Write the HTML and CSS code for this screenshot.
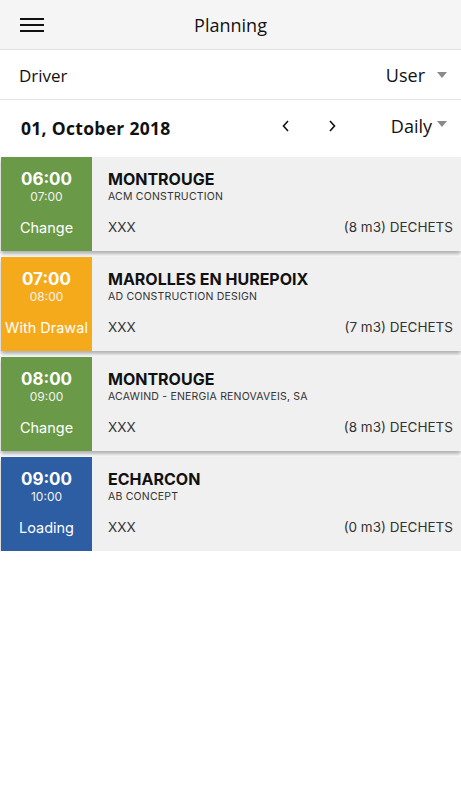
FILE: index.html
```html
<!DOCTYPE html>
<html>
<head>
<meta charset="utf-8">
<link rel="stylesheet" href="styles.css">
</head>
<body>
<header class="topbar">
  <svg class="menu" width="24" height="16" viewBox="0 0 24 16"><rect x="0" y="1" width="24" height="2" fill="#111"/><rect x="0" y="7" width="24" height="2" fill="#111"/><rect x="0" y="13" width="24" height="2" fill="#111"/></svg>
  <div class="title">Planning</div>
</header>
<div class="row driver">
  <span class="label">Driver</span>
  <span class="select">User <span class="caret"></span></span>
</div>
<div class="row daterow">
  <span class="date">01, October 2018</span>
  <span class="nav">
    <svg width="10" height="14" viewBox="0 0 10 14"><path d="M7 2 L2.5 7 L7 12" fill="none" stroke="#111" stroke-width="1.6"/></svg>
    <svg width="10" height="14" viewBox="0 0 10 14"><path d="M3 2 L7.5 7 L3 12" fill="none" stroke="#111" stroke-width="1.6"/></svg>
  </span>
  <span class="select daily">Daily <span class="caret"></span></span>
</div>
<main class="list">
  <div class="card">
    <div class="time green"><b>06:00</b><small>07:00</small><span class="status">Change</span></div>
    <div class="info"><div class="place">MONTROUGE</div><div class="company">ACM CONSTRUCTION</div><div class="bottom"><span>XXX</span><span>(8 m3) DECHETS</span></div></div>
  </div>
  <div class="card">
    <div class="time orange"><b>07:00</b><small>08:00</small><span class="status">With Drawal</span></div>
    <div class="info"><div class="place">MAROLLES EN HUREPOIX</div><div class="company">AD CONSTRUCTION DESIGN</div><div class="bottom"><span>XXX</span><span>(7 m3) DECHETS</span></div></div>
  </div>
  <div class="card">
    <div class="time green"><b>08:00</b><small>09:00</small><span class="status">Change</span></div>
    <div class="info"><div class="place">MONTROUGE</div><div class="company">ACAWIND - ENERGIA RENOVAVEIS, SA</div><div class="bottom"><span>XXX</span><span>(8 m3) DECHETS</span></div></div>
  </div>
  <div class="card">
    <div class="time blue"><b>09:00</b><small>10:00</small><span class="status">Loading</span></div>
    <div class="info"><div class="place">ECHARCON</div><div class="company">AB CONCEPT</div><div class="bottom"><span>XXX</span><span>(0 m3) DECHETS</span></div></div>
  </div>
</main>
</body>
</html>
```
FILE: styles.css
```css
* { box-sizing: border-box; }
body { margin: 0; width: 461px; background: #fff; font-family: "Open Sans", "Noto Sans", sans-serif; color: #111; }
.topbar { height: 50px; background: #f5f5f5; border-bottom: 1px solid #e2e2e2; display: flex; align-items: center; justify-content: center; position: relative; }
.menu { position: absolute; left: 20px; top: 17px; }
.title { font-size: 18px; font-weight: 500; color: #111; margin-top: 1px; }
.row { display: flex; align-items: center; padding: 0 14px 0 19px; }
.driver { height: 50px; border-bottom: 1px solid #e3e3e3; }
.label { font-size: 17px; flex: 1; margin-top: 1px; }
.select { font-size: 18px; display: flex; align-items: center; }
.caret { display: inline-block; width: 0; height: 0; border-left: 5.5px solid transparent; border-right: 5.5px solid transparent; border-top: 6px solid #8a8a8a; margin-left: 12px; margin-top: 1px; }
.daterow { height: 56px; padding-left: 21px; padding-right: 14px; padding-bottom: 2px; }
.date { font-size: 17.5px; font-weight: 700; flex: 1; margin-top: 1px; letter-spacing: 0.3px; }
.nav { display: flex; gap: 36px; margin-right: 54px; margin-top: -2px; }
.daily .caret { margin-left: 5px; margin-top: -4px; }
.daily { margin-top: -2px; }
.list { display: flex; flex-direction: column; gap: 6px; padding: 1px 0 0 1px; }
.card { height: 94px; display: flex; background: #f0f0f0; box-shadow: 0 3px 4px rgba(0,0,0,0.32); font-family: Inter, Roboto, sans-serif; }
.time { width: 91px; display: flex; flex-direction: column; align-items: center; color: #fff; padding-top: 12px; }
.time b { font-size: 17px; font-weight: 700; line-height: 20px; }
.time small { font-size: 12px; line-height: 14px; margin-top: 1px; color: #f3f3f3; }
.status { font-size: 14.5px; margin-top: 15px; }
.green { background: #6a9a47; }
.orange { background: #f5aa1c; }
.blue { background: #2d5ea3; }
.info { flex: 1; padding: 12px 8px 0 16px; display: flex; flex-direction: column; }
.place { font-size: 16px; font-weight: 700; line-height: 20px; color: #111; }
.company { font-size: 10.5px; line-height: 14px; margin-top: 1px; color: #333; letter-spacing: 0.2px; }
.bottom { display: flex; justify-content: space-between; font-size: 13.5px; margin-top: 15px; color: #333; }
```
